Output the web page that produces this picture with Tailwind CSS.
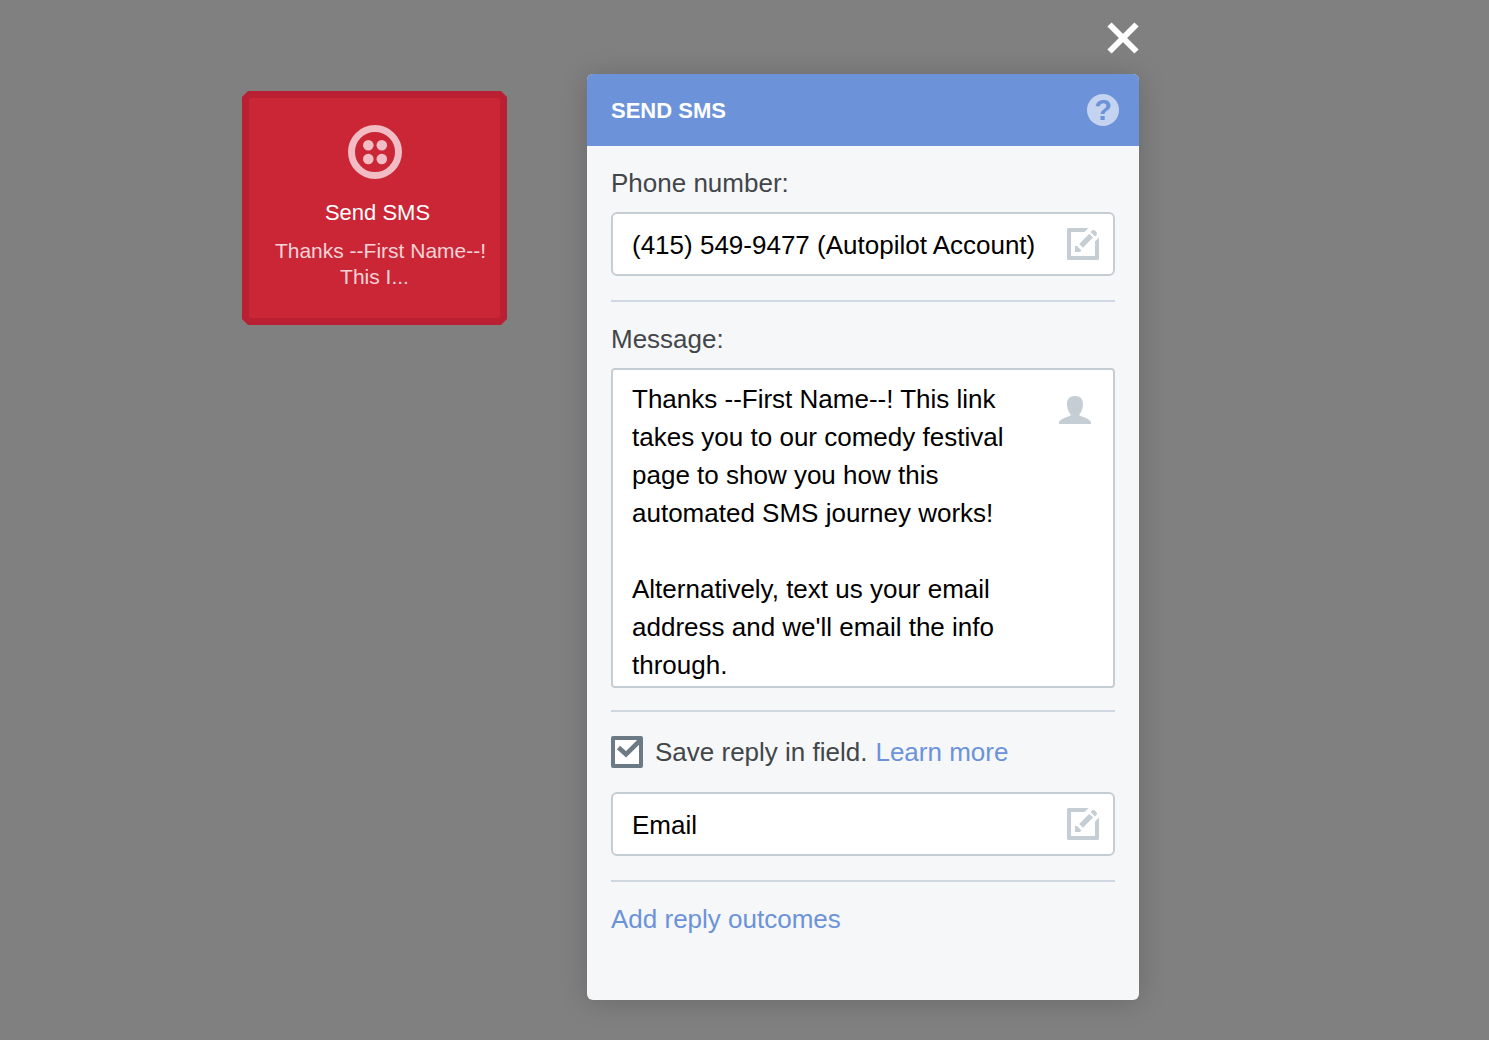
<!DOCTYPE html>
<html lang="en">
<head>
  <meta charset="UTF-8">
  <meta name="viewport" content="width=device-width, initial-scale=1.0">
  <title>Send SMS</title>
  <script src="https://cdn.jsdelivr.net/npm/@tailwindcss/browser@4"></script>
</head>
<body class="bg-[#808080] min-h-screen font-['Liberation_Sans',Arial,sans-serif]">

  <main class="flex justify-center items-start gap-20 pr-[108px] pt-[22px] pb-10">

    <!-- Journey card -->
    <div class="mt-[69px] w-[265px] shrink-0 bg-[#b92031] p-[7px] [clip-path:polygon(6px_0,calc(100%_-_6px)_0,100%_6px,100%_calc(100%_-_6px),calc(100%_-_6px)_100%,6px_100%,0_calc(100%_-_6px),0_6px)]">
      <div class="flex flex-col items-center rounded-xs bg-[#ca2636] pt-[27px] pb-7 text-center">
        <svg class="size-[54px]" viewBox="0 0 54 54" fill="#f1bcc4" aria-hidden="true">
          <circle cx="27" cy="27" r="23.5" fill="none" stroke="#f1bcc4" stroke-width="7" />
          <circle cx="20.3" cy="20.3" r="5.3" />
          <circle cx="33.8" cy="20.3" r="5.3" />
          <circle cx="20.3" cy="34" r="5.3" />
          <circle cx="33.8" cy="34" r="5.3" />
        </svg>
        <h2 class="mt-[21px] pl-1.5 text-[22px] leading-[26px] text-white">Send SMS</h2>
        <p class="mt-3 text-[21px] leading-[26px] text-[#f8d3d8]">
          <span class="block pl-3">Thanks --First Name--!</span>
          <span class="block">This I...</span>
        </p>
      </div>
    </div>

    <!-- Settings panel -->
    <div class="w-[552px]">
      <div class="flex justify-end mb-5">
        <button type="button" aria-label="Close">
          <svg class="size-8" viewBox="0 0 32 32" fill="none" stroke="#fff" stroke-width="6" stroke-linejoin="round" aria-hidden="true">
            <path d="M2.500 2.500L29.500 29.500M29.500 2.500L2.500 29.500" />
          </svg>
        </button>
      </div>

      <section class="rounded-md overflow-hidden bg-[#f5f7f9] shadow-[0_2px_28px_rgba(0,0,0,0.18)]">
        <header class="flex items-center justify-between h-[72px] bg-[#6c93d9] pl-6 pr-5">
          <h1 class="text-[22px] font-bold text-white">SEND SMS</h1>
          <button type="button" aria-label="Help" class="flex items-center justify-center size-8 rounded-full bg-[#c4d4f0] text-[29px] leading-8 font-bold text-[#6c93d9]">?</button>
        </header>

        <form class="px-6 pt-[18px] pb-[62px] text-[26px] leading-[38px] text-[#434649]">
          <label for="phone" class="block">Phone number:</label>
          <div class="relative mt-2.5">
            <input id="phone" type="text" readonly value="(415) 549-9477 (Autopilot Account)" class="block w-full h-16 rounded-md border-2 border-[#c5ced4] bg-white pl-[19px] pr-16 pt-0.5 text-black outline-none">
            <button type="button" aria-label="Edit phone number" class="absolute top-4 right-4">
              <svg class="size-8" viewBox="0 0 32 32" fill="#c5ced4" aria-hidden="true">
                <path d="M1.500 0H21.500L17.500 4H4V28H28V13.500L32 9.500V30.500Q32 32 30.500 32H1.500Q0 32 0 30.500V1.500Q0 0 1.500 0Z" />
                <path d="M22.300 5.800L26 9.500L16 19.700L12.200 16ZM23.500 4L25.500 2Q29.800 2.200 30 6.500L28 8.500ZM8 18H10L14.500 22.500L13 24H8Z" />
              </svg>
            </button>
          </div>

          <hr class="mt-6 mb-[18px] border-t-2 border-[#cfd8e2]">

          <label for="message" class="block">Message:</label>
          <div class="relative mt-2.5">
            <textarea id="message" class="block w-full h-80 resize-none overflow-hidden rounded-sm border-2 border-[#c5ced4] bg-white pl-[19px] pr-20 pt-2.5 text-black outline-none">Thanks --First Name--! This link takes you to our comedy festival page to show you how this automated SMS journey works!

Alternatively, text us your email address and we'll email the info through.</textarea>
            <button type="button" aria-label="Insert contact field" class="absolute top-7 right-6">
              <svg class="w-8 h-7" viewBox="0 0 32 28" fill="#c5ced4" aria-hidden="true">
                <path d="M16 0C21.500 0 24 3.500 24 8C24 12.500 22.500 16 20.300 18.500C20.300 19.500 21 20 22.500 20.500C28 22 31.500 24.500 32 26V28H0V26C0.500 24.500 4 22 9.500 20.500C11 20 11.700 19.500 11.700 18.500C9.500 16 8 12.500 8 8C8 3.500 10.500 0 16 0Z" />
              </svg>
            </button>
          </div>

          <hr class="mt-[22px] mb-6 border-t-2 border-[#cfd8e2]">

          <div class="flex items-center h-8">
            <span class="relative size-8 mr-3">
              <input id="save-reply" type="checkbox" checked class="peer block size-8 appearance-none rounded-xs border-4 border-[#6c7a86] bg-white">
              <svg class="absolute inset-0 size-8 pointer-events-none hidden peer-checked:block" viewBox="0 0 32 32" fill="none" stroke="#6c7a86" stroke-width="4.600" aria-hidden="true">
                <path d="M7.500 11.500L15 18.300L29 4.500" />
              </svg>
            </span>
            <label for="save-reply">Save reply in field.</label>
            <a href="#" class="ml-2 text-[#6c93d9]">Learn more</a>
          </div>

          <div class="relative mt-6">
            <input id="field" type="text" readonly aria-label="Reply field" value="Email" class="block w-full h-16 rounded-md border-2 border-[#c5ced4] bg-white pl-[19px] pr-16 pt-0.5 text-black outline-none">
            <button type="button" aria-label="Edit reply field" class="absolute top-4 right-4">
              <svg class="size-8" viewBox="0 0 32 32" fill="#c5ced4" aria-hidden="true">
                <path d="M1.500 0H21.500L17.500 4H4V28H28V13.500L32 9.500V30.500Q32 32 30.500 32H1.500Q0 32 0 30.500V1.500Q0 0 1.500 0Z" />
                <path d="M22.300 5.800L26 9.500L16 19.700L12.200 16ZM23.500 4L25.500 2Q29.800 2.200 30 6.500L28 8.500ZM8 18H10L14.500 22.500L13 24H8Z" />
              </svg>
            </button>
          </div>

          <hr class="mt-6 mb-[18px] border-t-2 border-[#cfd8e2]">

          <a href="#" class="block text-[#6c93d9]">Add reply outcomes</a>
        </form>
      </section>
    </div>

  </main>

</body>
</html>
